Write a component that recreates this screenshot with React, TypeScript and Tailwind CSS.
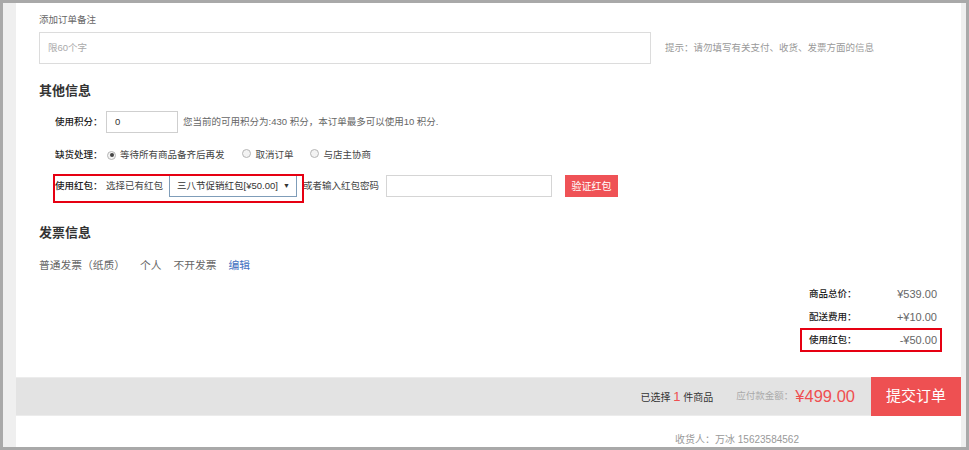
import React from 'react'

const font = { fontFamily: '"Liberation Sans", "Noto Sans CJK SC", sans-serif' }

function Radio({ checked }: { checked?: boolean }) {
  return (
    <span className="inline-flex items-center justify-center w-[9px] h-[9px] rounded-full border border-[#b5b5b5] bg-[#f3f3f3]">
      {checked && <span className="w-[4px] h-[4px] rounded-full bg-[#444]" />}
    </span>
  )
}

export default function App() {
  return (
    <div
      className="w-[969px] h-[450px] border-[3px] border-[#a9a9a9] flex overflow-hidden bg-white text-[9.5px] text-[#666]"
      style={font}
    >
      <div className="w-[13px] shrink-0 bg-[#efefef]" />

      <div className="flex-1 flex flex-col bg-white">
        {/* 订单备注 */}
        <div className="pt-[8px] px-[23px]">
          <div className="leading-[18px] text-[#666]">添加订单备注</div>
          <div className="mt-[3px] flex items-center">
            <div className="w-[612px] h-[32px] border border-[#dcdcdc] flex items-center pl-[8px] text-[#aaa]">
              限60个字
            </div>
            <div className="ml-[14px] text-[#999]">提示：请勿填写有关支付、收货、发票方面的信息</div>
          </div>
        </div>

        {/* 其他信息 */}
        <div className="px-[23px]">
          <div className="mt-[15px] leading-[24px] text-[13px] font-bold text-[#333]">其他信息</div>

          <div className="mt-[8px] h-[22px] flex items-center pl-[16px]">
            <span className="w-[51px] font-medium text-[#222]">使用积分：</span>
            <div className="w-[72px] h-[22px] border border-[#cfcfcf] flex items-center pl-[8px] text-[#333]">0</div>
            <span className="ml-[5px] text-[#666]">您当前的可用积分为:430 积分，本订单最多可以使用10 积分.</span>
          </div>

          <div className="mt-[11px] h-[22px] flex items-center pl-[16px]">
            <span className="w-[52px] font-medium text-[#222]">缺货处理：</span>
            <Radio checked />
            <span className="ml-[4px] text-[#444]">等待所有商品备齐后再发</span>
            <span className="ml-[17px]"><Radio /></span>
            <span className="ml-[5px] text-[#444]">取消订单</span>
            <span className="ml-[16px]"><Radio /></span>
            <span className="ml-[5px] text-[#444]">与店主协商</span>
          </div>

          <div className="relative mt-[9px] h-[22px] flex items-center pl-[16px]">
            <span className="w-[51px] font-medium text-[#222]">使用红包：</span>
            <span className="text-[#444]">选择已有红包</span>
            <div className="ml-[6px] w-[128px] h-[22px] border border-[#7f9db9] flex items-center justify-between pl-[7px] pr-[6px] text-[#333] text-[9.5px] whitespace-nowrap">
              <span>三八节促销红包[¥50.00]</span>
              <span className="text-[7px] text-[#333]">▼</span>
            </div>
            <span className="ml-[6px] text-[#444]">或者输入红包密码</span>
            <div className="ml-[7px] w-[166px] h-[22px] border border-[#d5d5d5]" />
            <button className="ml-[13px] w-[53px] h-[22px] bg-[#ef5256] text-white text-[10px]">验证红包</button>
            <div className="absolute left-[14px] top-[-1px] w-[251px] h-[29px] border-2 border-[#e60012]" />
          </div>
        </div>

        {/* 发票信息 */}
        <div className="px-[23px]">
          <div className="mt-[24px] leading-[24px] text-[13px] font-bold text-[#333]">发票信息</div>
          <div className="mt-[11px] leading-[18px] flex items-center text-[10.75px] text-[#666]">
            <span>普通发票（纸质）</span>
            <span className="ml-[15px]">个人</span>
            <span className="ml-[12px]">不开发票</span>
            <span className="ml-[12px] text-[#3f6fbf]">编辑</span>
          </div>
        </div>

        {/* 金额汇总 */}
        <div className="mt-[9px] flex flex-col items-end pr-[24px] text-[#222]">
          {[
            ['商品总价：', '¥539.00'],
            ['配送费用：', '+¥10.00'],
          ].map(([label, value]) => (
            <div key={label} className="h-[23px] flex items-center">
              <span className="w-[48px] font-medium">{label}</span>
              <span className="w-[80px] text-right text-[11px] text-[#666]">{value}</span>
            </div>
          ))}
          <div className="relative h-[23px] flex items-center">
            <span className="w-[48px] font-medium">使用红包：</span>
            <span className="w-[80px] text-right text-[11px] text-[#666]">-¥50.00</span>
            <div className="absolute left-[-9px] right-[-5px] top-[-1px] bottom-0 border-2 border-[#e60012]" />
          </div>
        </div>

        {/* 底部结算栏 */}
        <div className="mt-[25px] h-[39px] flex items-center justify-end bg-[#e3e3e3] border-y border-[#ececec]">
          <span className="text-[10px] text-[#333]">
            已选择 <span className="text-[13px] text-[#ef4f51]">1</span> 件商品
          </span>
          <span className="ml-[23px] text-[9.5px] text-[#aaa]">应付款金额：</span>
          <span className="ml-[2px] text-[16.5px] text-[#ef4f51]">¥499.00</span>
          <button className="ml-[16px] w-[90px] h-[39px] bg-[#ee5052] text-white text-[15px]">提交订单</button>
        </div>

        <div className="mt-[15px] leading-[18px] text-center pl-[497px] text-[10px] text-[#999]">
          收货人：万冰 15623584562
        </div>
      </div>

      <div className="w-[5px] shrink-0 bg-[#efefef]" />
    </div>
  )
}
